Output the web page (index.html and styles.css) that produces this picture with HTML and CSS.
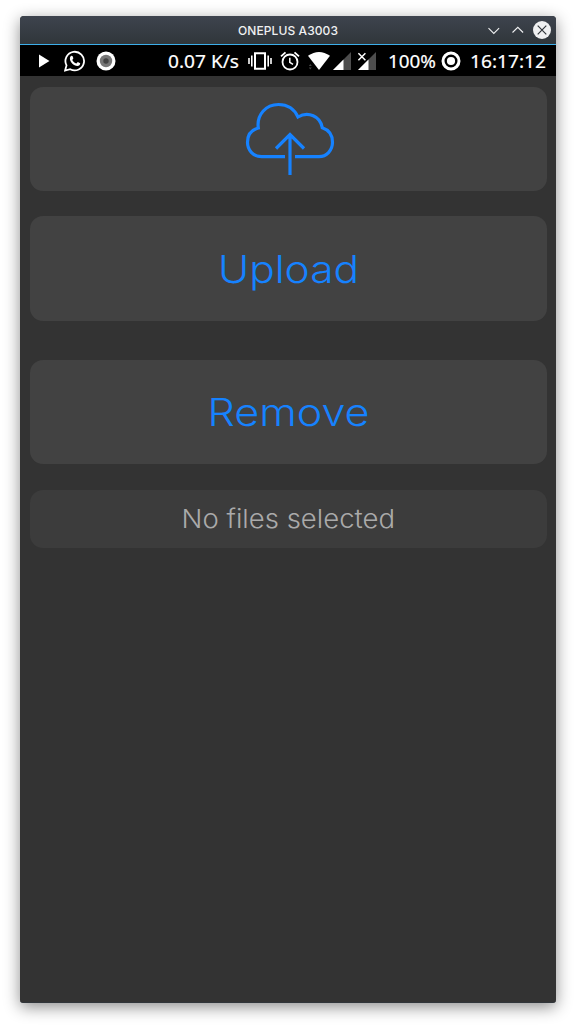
FILE: index.html
```html
<!DOCTYPE html>
<html lang="en">
<head>
<meta charset="utf-8">
<title>ONEPLUS A3003</title>
<link rel="stylesheet" href="styles.css">
</head>
<body>
<main class="window">
  <header class="titlebar">
    <span class="title">ONEPLUS A3003</span>
    <svg class="controls" width="64" height="20" viewBox="0 0 64 20" fill="none">
      <path d="M1.500 8.200L6.800 13.400L12.100 8.200M25.500 12.500L30.800 7.300L36.100 12.500" stroke="#eff0f1" stroke-width="1.100"/>
      <circle cx="55" cy="10" r="9" fill="#eff0f1"/>
      <path d="M50.700 5.700L59.300 14.300M59.300 5.700L50.700 14.300" stroke="#31363b" stroke-width="1.200"/>
    </svg>
  </header>
  <div class="statusbar">
    <div class="group">
      <svg class="play" width="11" height="14" viewBox="0 0 11 14"><path d="M0 .500L10.500 7L0 13.500Z" fill="#fff"/></svg>
      <svg class="chat" width="22" height="22" viewBox="0 0 22 22" fill="none">
        <path d="M1.100 20.600L2.500 15.400A9.300 9.300 0 1 1 6.200 19.200Z" stroke="#fff" stroke-width="1.800"/>
        <path d="M7.600 5.800L8.500 6L9.400 8.300L8.300 9.900C9.200 11.600 10.600 12.800 12.400 13.600L13.800 12.100L16.200 13.300C16.300 14.900 15 16 13.500 16C9.500 15.800 5.800 11.700 5.900 8.400C5.900 7.200 6.600 6 7.600 5.800Z" fill="#fff"/>
      </svg>
      <svg class="record" width="20" height="20" viewBox="0 0 20 20"><circle cx="10" cy="10" r="9.500" fill="#fff"/><circle cx="10" cy="10" r="6.200" fill="#777"/><circle cx="10" cy="10" r="2.700" fill="#444"/></svg>
    </div>
    <div class="group">
      <svg class="speed" width="76" height="30"><text x="2" y="22" textLength="71" lengthAdjust="spacingAndGlyphs">0.07 K/s</text></svg>
      <svg class="vibrate" width="24" height="20" viewBox="0 0 24 20"><path d="M7 2.200H17V17.800H7Z" fill="none" stroke="#fff" stroke-width="2"/><path d="M3.800 4.500V15.500M1 7V13M20.200 4.500V15.500M23 7V13" stroke="#fff" stroke-width="1.600"/></svg>
      <svg class="alarm" width="20" height="20" viewBox="0 0 20 20" fill="none" stroke="#fff"><circle cx="10" cy="11" r="7.500" stroke-width="1.800"/><path d="M9.800 6.800V11.400L13 13.400" stroke-width="1.500"/><path d="M1 5.400L5.500 1.400M14.500 1.400L19 5.400" stroke-width="1.800"/></svg>
      <svg class="wifi" width="22" height="18" viewBox="0 0 22 18"><path d="M0 3.800Q11-3.800 22 3.800L11 18Z" fill="#fff"/><path d="M.800 14L2.300 12L3.800 14ZM.800 15.500H3.800L2.300 17.500Z" fill="#444"/></svg>
      <svg class="signal" width="18" height="18" viewBox="0 0 18 18"><path d="M18 0V18H0Z" fill="#4d4d4d"/><path d="M10.500 7.500V18H0Z" fill="#fff"/></svg>
      <svg class="signal-x" width="19" height="18" viewBox="0 0 19 18"><path d="M19 0V18H1Z" fill="#4d4d4d"/><path d="M11.500 7.500V18H1Z" fill="#fff"/><path d="M0 0H9V9H0Z" fill="#000"/><path d="M1.400 1.200L8.400 8.200M8.400 1.200L1.400 8.200" stroke="#fff" stroke-width="1.500"/></svg>
      <svg class="percent" width="50" height="30"><text x="0" y="22" textLength="48" lengthAdjust="spacingAndGlyphs">100%</text></svg>
      <svg class="battery" width="20" height="20" viewBox="0 0 20 20"><circle cx="10" cy="10" r="8" fill="none" stroke="#fff" stroke-width="3"/><circle cx="10" cy="10" r="4.100" fill="#fff"/></svg>
      <svg class="clock" width="78" height="30"><text x="0" y="22" textLength="76" lengthAdjust="spacingAndGlyphs">16:17:12</text></svg>
    </div>
  </div>
  <section class="screen">
    <div class="card cloud-card">
      <svg width="90" height="74" viewBox="0 0 90 74" fill="none" stroke="#1682ff" stroke-width="3.200">
        <path d="M40 54.600H16.500C8 54.600 2.500 48 2.500 40.300C2.500 33 6.500 27.800 13.300 26C11.500 12.500 21 2.500 33.500 2.500C42.500 2.500 49.500 7.500 53 15C63 9 75.500 14 77.300 25.800C84 28 87.500 33.500 87.500 40.300C87.500 48.500 81.500 54.600 74 54.600H50"/>
        <path d="M45 73V33M31 46.500L45 32.500L59 46.500"/>
      </svg>
    </div>
    <button class="card upload"><svg width="180" height="60"><text x="20" y="44" textLength="141" lengthAdjust="spacingAndGlyphs">Upload</text></svg></button>
    <button class="card remove"><svg width="180" height="60"><text x="9.500" y="44" textLength="162" lengthAdjust="spacingAndGlyphs">Remove</text></svg></button>
    <div class="card message"><svg width="230" height="40"><text x="8.500" y="28.500" textLength="213.500" lengthAdjust="spacingAndGlyphs">No files selected</text></svg></div>
  </section>
</main>
</body>
</html>
```
FILE: styles.css
```css
* { box-sizing: border-box; }
body {
  margin: 0;
  padding: 16px 20px 24px;
  background: #fff;
  font-family: Inter, sans-serif;
}
svg { display: block; flex: none; }
.window {
  height: 987px;
  display: flex;
  flex-direction: column;
  overflow: hidden;
  border-radius: 4px 4px 3px 3px;
  background: #333;
  border-bottom: 1px solid #31363b;
  box-shadow: 0 4px 16px rgba(0, 0, 0, .45);
}
.titlebar {
  height: 29px;
  flex: none;
  display: grid;
  grid-template-columns: 64px 1fr 64px;
  align-items: center;
  padding: 0 5px 0 3px;
  border-bottom: 1px solid #3daee9;
  background: linear-gradient(#3e444e, #30363a);
}
.title {
  grid-column: 2;
  text-align: center;
  color: #eff0f1;
  font-size: 12px;
  font-weight: 500;
  line-height: 26px;
  padding: 2px 0 0 2px;
  letter-spacing: .1px;
}
.statusbar {
  height: 31px;
  flex: none;
  display: flex;
  justify-content: space-between;
  align-items: center;
  padding: 0 8px 0 19px;
  background: #000;
}
.group { display: flex; align-items: center; }
.statusbar text { fill: #fff; font: 400 18.500px "Noto Sans", sans-serif; stroke: #fff; stroke-width: .2px; }
.chat { margin-left: 14px; }
.record { margin-left: 9.500px; }
.vibrate { margin-left: 6px; }
.alarm { margin-left: 8px; }
.wifi { margin-left: 8px; }
.signal { margin-left: 3px; }
.signal-x { margin-left: 6px; }
.percent { margin-left: 11.500px; }
.battery { margin-left: 3px; }
.clock { margin-left: 9.500px; }
.screen { padding: 11px 9.500px 0 10px; }
.card {
  width: 100%;
  height: 104px;
  display: flex;
  align-items: center;
  justify-content: center;
  padding: 0;
  border: 0;
  border-radius: 13px;
  background: #424242;
}
.cloud-card { padding: 0 0 0 4px; }
.upload { height: 105px; margin-top: 25px; }
.remove { margin-top: 39px; }
.upload text, .remove text { fill: #1682ff; font: 300 37.500px Inter, sans-serif; }
.message { height: 58px; margin-top: 26px; background: #3c3c3c; }
.message text { fill: #aaa; font: 300 26px Inter, sans-serif; }
```
